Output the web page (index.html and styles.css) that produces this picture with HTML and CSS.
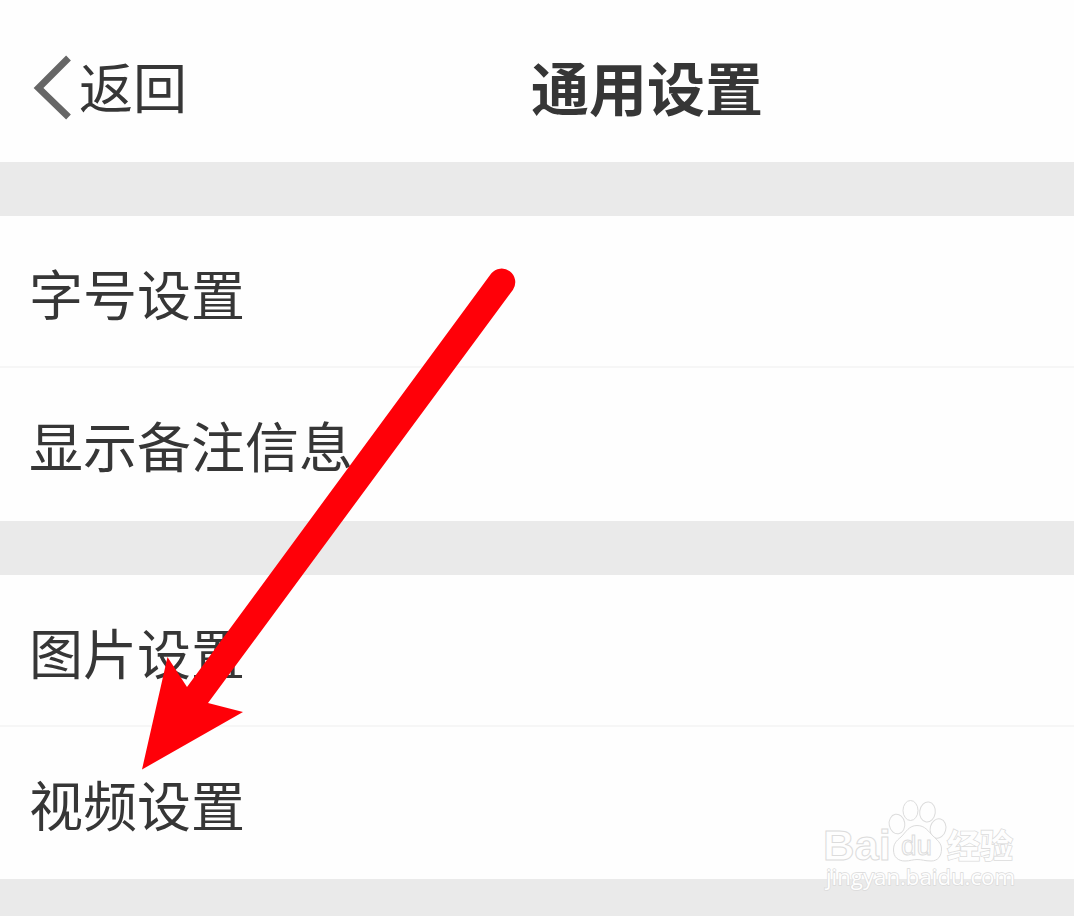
FILE: index.html
```html
<!DOCTYPE html>
<html lang="zh-CN">
<head>
<meta charset="UTF-8">
<meta name="viewport" content="width=device-width,initial-scale=1.0">
<title>通用设置</title>
<link rel="stylesheet" href="styles.css">
</head>
<body>
	<header>
		<a class="back">
			<svg class="back-icon" width="38" height="66" viewBox="0 0 38 66">
				<path d="M35.5 3L5.5 33L35.5 62"/>
			</svg>
			<span>返回</span>
		</a>
		<h3>通用设置</h3>
	</header>
	<ul class="list">
		<li>字号设置</li>
		<li>显示备注信息</li>
	</ul>
	<ul class="list">
		<li>图片设置</li>
		<li>视频设置</li>
	</ul>

	<!-- 箭头 -->
	<svg class="arrow" width="1074" height="916" viewBox="0 0 1074 916">
		<path d="M142 769.5L167.5 657L187 687L491.2 273.5A13.6 13.6 0 0 1 513 289.7L208 703L243 712Z"/>
	</svg>

	<!-- 水印 -->
	<svg class="mark" width="220" height="126" viewBox="0 0 220 126">
		<g class="logo">
			<text class="bai" x="13" y="70" textLength="68" lengthAdjust="spacingAndGlyphs">Bai</text>
			<ellipse cx="87" cy="34" rx="7.8" ry="9.8" transform="rotate(-10 87 34)"/>
			<ellipse cx="100.5" cy="20.5" rx="7.5" ry="10"/>
			<ellipse cx="117.5" cy="22" rx="7.8" ry="10" transform="rotate(8 117.5 22)"/>
			<ellipse cx="128" cy="38.5" rx="7.8" ry="9.8" transform="rotate(15 128 38.5)"/>
			<path d="M107 35.5C99 35.5 96 42 91 47C86 51 83.5 54 83.5 60C83.5 67 88 71 95 71C100 71 103 69.5 107 69.5C112 69.5 115 71 121 71C128 71 131.5 66 131.5 59C131.5 53 127 50 123 46C118 41 115 35.5 107 35.5Z"/>
			<text class="du" x="91" y="65" textLength="31" lengthAdjust="spacingAndGlyphs">du</text>
			<text class="jy" x="137" y="68" textLength="66" lengthAdjust="spacingAndGlyphs">经验</text>
		</g>
		<text class="url" x="16" y="95" textLength="189" lengthAdjust="spacingAndGlyphs">jingyan.baidu.com</text>
	</svg>
</body>
</html>
```
FILE: styles.css
```css
*{
	margin:0;
	padding:0;
}
html{
	overflow: hidden;
}
body{
	position: relative;
	height: 916px;
	overflow: hidden;
	background: #eaeaea;
	color: #363636;
	font-family: "Noto Sans CJK SC", sans-serif;
	font-size: 54px;
}
header{
	display: grid;
	grid-template-columns: 531px 1fr;
	align-items: center;
	height: 162px;
	background: #fefefe;
}
.back{
	display: flex;
	align-items: center;
	padding-left: 33px;
	margin-top: 13px;
}
.back span{
	margin: -3px 0 0 8px;
	font-size: 54px;
	line-height: 66px;
}
.back-icon path{
	fill: none;
	stroke: #666;
	stroke-width: 6.8;
}
h3{
	margin-top: 10px;
	font-size: 58px;
	font-weight: 700;
	line-height: 66px;
}
.list{
	margin-top: 54px;
	background: #fefefe;
	list-style: none;
}
.list li{
	box-sizing: border-box;
	height: 152px;
	padding-left: 29px;
	line-height: 153px;
}
.list li:first-child{
	border-bottom: 2px solid #f6f6f6;
}
.list li:last-child{
	height: 153px;
}
.list:last-of-type li:last-child{
	height: 152px;
}
.arrow{
	position: absolute;
	left: 0;
	top: 0;
	fill: #ff0008;
}
.mark{
	position: absolute;
	left: 810px;
	top: 790px;
}
.logo{
	fill: #fefefe;
	stroke: #dcdcdc;
	stroke-width: 1;
}
.bai{
	font: bold 43px "Liberation Sans", sans-serif;
}
.du{
	font: 28px "Liberation Sans", sans-serif;
}
.jy{
	font: bold 33px "Noto Sans CJK SC", sans-serif;
	paint-order: stroke;
	stroke-width: 1.6;
}
.url{
	font: 22px "Open Sans", sans-serif;
	fill: #fefefe;
	stroke: #dadada;
	stroke-width: 1.4;
	paint-order: stroke;
}
```
